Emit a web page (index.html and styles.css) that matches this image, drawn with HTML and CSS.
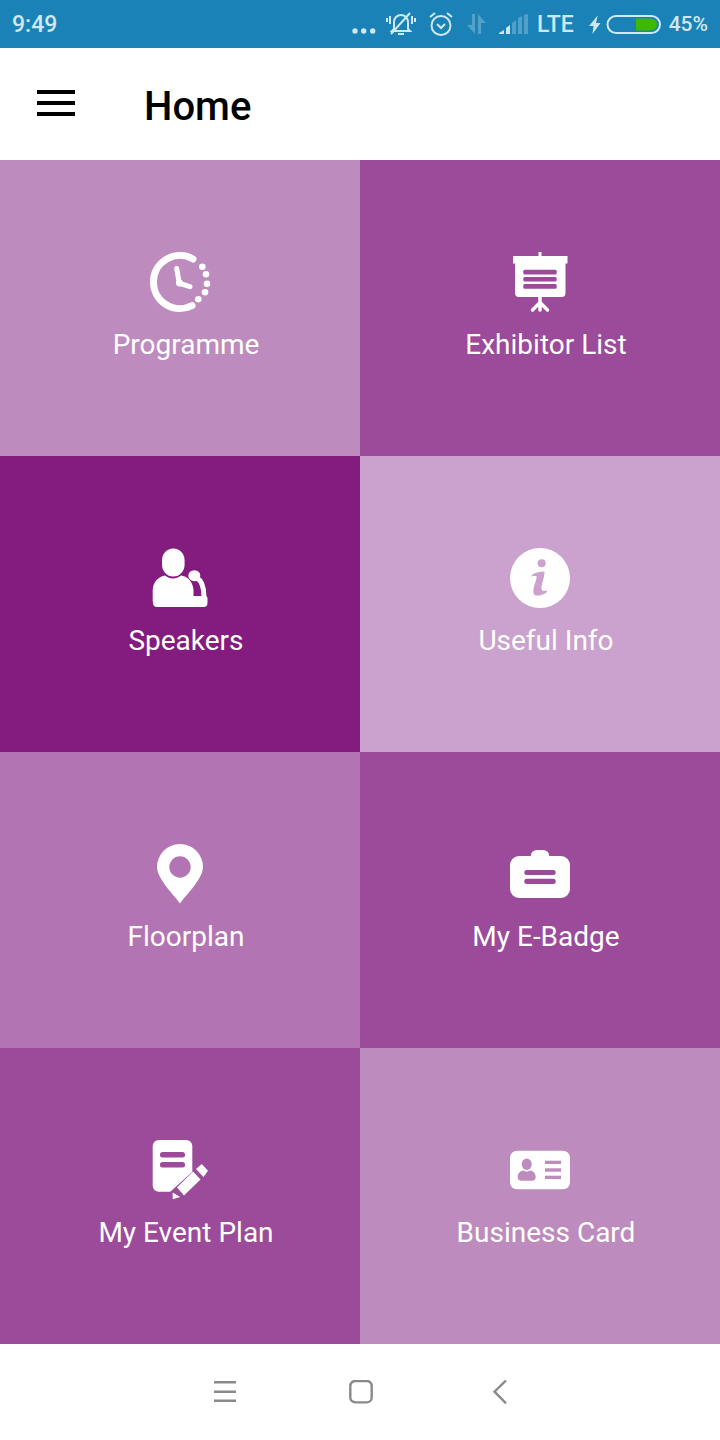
FILE: index.html
```html
<!DOCTYPE html>
<html lang="en">
<head>
    <meta charset="UTF-8">
    <meta name="viewport" content="width=device-width, initial-scale=1.0">
    <title>Home</title>
    <link rel="stylesheet" href="styles.css">
</head>
<body>
    <div class="status-bar">
        <span class="clock">9:49</span>
        <div class="status-icons">
            <svg width="24" height="24" viewBox="0 0 24 24" class="icon-dots"><circle cx="3" cy="19" r="2.700"/><circle cx="11.700" cy="19" r="2.700"/><circle cx="20.700" cy="19" r="2.700"/></svg>
            <svg width="30" height="24" viewBox="0 0 30 24" class="icon-line">
                <path d="M8 17V10a7 7 0 0 1 14 0v7l2 2H6z"/>
                <path d="M12 22h6M4 4 v8M1 6v4M26 4v8M29 6v4M5 22 24 1"/>
            </svg>
            <svg width="26" height="24" viewBox="0 0 26 24" class="icon-line">
                <circle cx="13" cy="13.500" r="9.500"/>
                <path d="M9 12l4 4 4-4M2 5 7 1M24 5l-5-4"/>
            </svg>
            <svg width="21" height="24" viewBox="0 0 21 24" class="icon-faded"><path d="M6 2h3v20L1 13h5zM12 2l8 9h-5v11h-3z"/></svg>
            <svg width="29" height="24" viewBox="0 0 29 24" class="icon-signal">
                <path class="on" d="M0 21l5-3v4H0zM7 16l4-3v9H7z"/>
                <path d="M13 11l4-3v14h-4zM19 6l4-2v18h-4zM25 3l4-1v20h-4z"/>
            </svg>
            <span class="lte">LTE</span>
            <div class="charge">
                <svg width="75" height="24" viewBox="0 0 75 24">
                    <path class="bolt" d="M11.700 3.500 3 14h4.500l-1 8 8-11H10z"/>
                    <rect class="batt" x="21.500" y="4" width="52.500" height="17" rx="8.500"/>
                    <path class="batt-fill" d="M50 6.500h15a6 6 0 0 1 0 12H50z"/>
                </svg>
                <span class="pct">45%</span>
            </div>
        </div>
    </div>

    <header class="app-bar">
        <div class="burger"><span></span><span></span><span></span></div>
        <h1>Home</h1>
    </header>

    <main class="grid">
        <a class="tile soft">
            <svg class="tile-icon" viewBox="0 0 60 60">
                <path class="stroke" d="M43 7A26.500 26.500 0 1 0 42 53.600"/>
                <path class="hand" d="M26.700 16.500 29.300 31.300 40 34.700"/>
                <circle cx="29.500" cy="31" r="3.500"/>
                <circle cx="52.300" cy="14.700" r="3.300"/><circle cx="56" cy="22.300" r="3.300"/><circle cx="57" cy="31.700" r="3.300"/><circle cx="55" cy="40.300" r="3.300"/><circle cx="48.300" cy="47.300" r="3.300"/>
            </svg>
            <span class="label">Programme</span>
        </a>
        <a class="tile mid">
            <svg class="tile-icon" viewBox="0 0 60 60">
                <path d="M28.500 0h3v4h26v7.500h-2V41a4 4 0 0 1-4 4H9a4 4 0 0 1-4-4V11.500H3V4h25.500z"/>
                <path class="legs" d="M30 44v14M22.500 58 30 50.500 37.500 58"/>
                <rect class="cut" x="13.300" y="17.800" width="33.400" height="4.600" rx="1.500"/>
                <rect class="cut" x="13.300" y="24.900" width="33.400" height="4.600" rx="1.500"/>
                <rect class="cut" x="13.300" y="32" width="33.400" height="4.700" rx="1.500"/>
            </svg>
            <span class="label">Exhibitor List</span>
        </a>
        <a class="tile deep">
            <svg class="tile-icon" viewBox="0 0 60 60">
                <rect x="12" y="0.500" width="22.600" height="28" rx="11" ry="12"/>
                <path d="M2.700 53V42C3 33 10 28 15 27.500c5 4 11 4 16 0 6 .5 12 6 12.500 14.500v6H55a2.500 2.500 0 0 1 2.500 2.500V55a4 4 0 0 1-4 4H7a4 4 0 0 1-4-4z"/>
                <ellipse cx="44.300" cy="27.700" rx="6" ry="5.500"/>
                <path class="mic" d="M47 30c5 3 7 8 7 19"/>
            </svg>
            <span class="label">Speakers</span>
        </a>
        <a class="tile pale">
            <svg class="tile-icon" viewBox="0 0 60 60">
                <circle cx="30" cy="30" r="30"/>
                <circle class="cut" cx="31.700" cy="15.300" r="4"/>
                <path class="cut" d="M21.500 27.500C25 24.500 29 23.500 34.500 23.500 34.500 30 31.500 36 31.500 40.500c0 2.500 2 3 5 2l.5 1.500c-4 3-8 4-11 3.500-2.500-.5-3-3.500-2.500-6.500.8-5 3-9 3.300-12.500-1.800-1-3.800-1-5 0z"/>
            </svg>
            <span class="label">Useful Info</span>
        </a>
        <a class="tile rose">
            <svg class="tile-icon" viewBox="0 0 60 60">
                <path fill-rule="evenodd" d="M30 59.500C25 52 7 35 7 23a23 23 0 0 1 46 0C53 35 35 52 30 59.500zM30 12.300a10.700 10.700 0 1 0 0 21.400 10.700 10.700 0 0 0 0-21.400z"/>
            </svg>
            <span class="label">Floorplan</span>
        </a>
        <a class="tile mid">
            <svg class="tile-icon" viewBox="0 0 60 60">
                <path d="M20.700 12a6 6 0 0 1 6-6h6.600a6 6 0 0 1 6 6h11.700a9 9 0 0 1 9 9v24a9 9 0 0 1-9 9H9a9 9 0 0 1-9-9V21a9 9 0 0 1 9-9z"/>
                <rect class="cut" x="14.300" y="26" width="31.400" height="5" rx="2.500"/>
                <rect class="cut" x="14.300" y="34.700" width="31.400" height="5.300" rx="2.500"/>
            </svg>
            <span class="label">My E-Badge</span>
        </a>
        <a class="tile mid">
            <svg class="tile-icon" viewBox="0 0 60 60">
                <rect x="2.700" y="0" width="39.600" height="51.700" rx="6"/>
                <rect class="cut" x="10" y="12" width="25" height="5.500" rx="2.500"/>
                <rect class="cut" x="10" y="22" width="25" height="5.500" rx="2.500"/>
                <path class="cut" d="M20 52 42.400 31.700H60V60H20z"/>
                <path d="M27 47.500 43 31.500 50.500 39.500 34 55.500z"/>
                <path d="M46 29 51.700 24 58 30.700 53.500 37z"/>
                <path d="M22.700 59.300V52.500l7.500 4.500z"/>
            </svg>
            <span class="label">My Event Plan</span>
        </a>
        <a class="tile soft">
            <svg class="tile-icon" viewBox="0 0 60 60">
                <rect x="0" y="10.700" width="60" height="38.600" rx="7"/>
                <ellipse class="cut" cx="16.700" cy="24.300" rx="5" ry="5.700"/>
                <path class="cut" d="M7.700 37c0-4 3-6.300 6-6.500 2 1.500 4 1.500 6 0 3 .2 6 2.500 6 6.500a3.700 3.700 0 0 1-3.700 3.700H11.400a3.700 3.700 0 0 1-3.700-3.700z"/>
                <rect class="cut" x="35" y="20.700" width="16" height="3.300"/>
                <rect class="cut" x="35" y="28.300" width="16" height="3.400"/>
                <rect class="cut" x="35" y="35.700" width="16" height="3.300"/>
            </svg>
            <span class="label">Business Card</span>
        </a>
    </main>

    <nav class="nav-bar">
        <svg width="24" height="24" viewBox="0 0 24 24"><path d="M1 2.300h22M1 11.700h22M1 20.700h22"/></svg>
        <svg width="24" height="24" viewBox="0 0 24 24"><rect x="1.300" y="1" width="21.400" height="21.400" rx="5"/></svg>
        <svg width="24" height="24" viewBox="0 0 24 24"><path d="M21 .5 9.500 11.700 21 23.300"/></svg>
    </nav>
</body>
</html>
```

FILE: styles.css
```css
* {
    box-sizing: border-box;
}
body {
    margin: 0;
    width: 720px;
    height: 1440px;
    overflow: hidden;
    font-family: Roboto, "Liberation Sans", sans-serif;
    background-color: white;
}

/* status bar */
.status-bar {
    height: 48px;
    background-color: #1a82b6;
    color: #cfe8f5;
    display: flex;
    align-items: center;
    justify-content: space-between;
    padding: 0 12px;
}
.clock {
    font-size: 23px;
    font-weight: 500;
}
.status-icons {
    display: flex;
    align-items: center;
    gap: 12px;
}
.status-icons svg {
    display: block;
    fill: #cfe8f5;
}
.status-icons .icon-dots {
    margin-right: -2px;
}
.status-icons .icon-line {
    fill: none;
    stroke: #cfe8f5;
    stroke-width: 2;
}
.icon-faded {
    opacity: 0.3;
}
.icon-signal path {
    opacity: 0.3;
}
.icon-signal .on {
    opacity: 1;
}
.lte {
    font-size: 23px;
    font-weight: 500;
    margin-left: -3px;
}
.charge {
    display: flex;
    align-items: center;
    gap: 8px;
}
.status-icons .batt {
    fill: none;
    stroke: #cfe8f5;
    stroke-width: 2;
}
.status-icons .batt-fill {
    fill: #3db900;
}
.pct {
    font-size: 21px;
    font-weight: 500;
}

/* app bar */
.app-bar {
    height: 112px;
    display: flex;
    align-items: center;
    padding-left: 37px;
}
.burger {
    width: 38px;
    display: flex;
    flex-direction: column;
    gap: 7px;
    margin-top: -3px;
}
.burger span {
    height: 4px;
    background-color: black;
}
.app-bar h1 {
    margin: 4px 0 0 69px;
    font-size: 40px;
    font-weight: 500;
    color: black;
}

/* tiles */
.grid {
    display: grid;
    grid-template-columns: 360px 360px;
    grid-auto-rows: 296px;
}
.tile {
    --tile: #bd8bbe;
    background-color: var(--tile);
    display: flex;
    flex-direction: column;
    align-items: center;
    padding-top: 92px;
    gap: 17px;
}
.soft { --tile: #bd8bbe; }
.mid { --tile: #9c4a9a; }
.deep { --tile: #841c80; }
.pale { --tile: #caa2cd; }
.rose { --tile: #b274b2; }

.tile-icon {
    width: 60px;
    height: 60px;
    display: block;
    fill: white;
    overflow: visible;
}
.tile-icon .cut {
    fill: var(--tile);
}
.tile-icon .stroke {
    fill: none;
    stroke: white;
    stroke-width: 7;
    stroke-linecap: round;
}
.tile-icon .hand {
    fill: none;
    stroke: white;
    stroke-width: 5;
    stroke-linecap: round;
    stroke-linejoin: round;
}
.tile-icon .legs {
    fill: none;
    stroke: white;
    stroke-width: 3.500;
    stroke-linecap: round;
}
.tile-icon .mic {
    fill: none;
    stroke: white;
    stroke-width: 5;
}
.label {
    font-size: 28px;
    line-height: 32px;
    color: white;
    margin-left: 12px;
    white-space: nowrap;
}

/* bottom nav */
.nav-bar {
    height: 96px;
    display: flex;
    align-items: center;
    justify-content: center;
    gap: 112px;
    padding-left: 2px;
}
.nav-bar svg {
    fill: none;
    stroke: #8a8a8a;
    stroke-width: 2.400;
}
```
